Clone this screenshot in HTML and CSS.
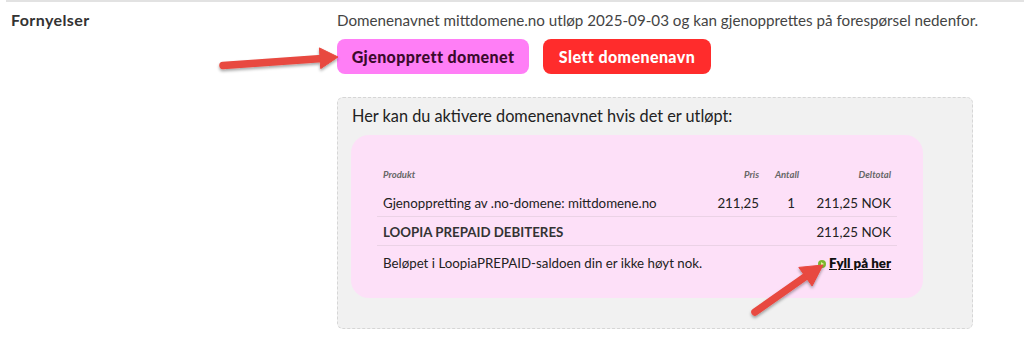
FILE: index.html
```html
<!DOCTYPE html>
<html lang="no">
<head>
<meta charset="utf-8">
<link rel="stylesheet" href="styles.css">
</head>
<body>
<div class="page">
  <div class="section">
    <div class="label">Fornyelser</div>
    <div class="content">
      <p class="desc">Domenenavnet mittdomene.no utløp 2025-09-03 og kan gjenopprettes på forespørsel nedenfor.</p>
      <div class="actions">
        <button class="btn btn-pink">Gjenopprett domenet</button>
        <button class="btn btn-red">Slett domenenavn</button>
      </div>
      <div class="panel">
        <h3 class="panel-title">Her kan du aktivere domenenavnet hvis det er utløpt:</h3>
        <div class="cart">
          <table class="tbl">
            <thead>
              <tr>
                <th class="c-prod">Produkt</th>
                <th class="c-pris">Pris</th>
                <th class="c-ant">Antall</th>
                <th class="c-tot">Deltotal</th>
              </tr>
            </thead>
            <tbody>
              <tr>
                <td class="c-prod">Gjenoppretting av .no-domene: mittdomene.no</td>
                <td class="c-pris">211,25</td>
                <td class="c-ant">1</td>
                <td class="c-tot">211,25 NOK</td>
              </tr>
              <tr>
                <td class="c-prod strong">LOOPIA PREPAID DEBITERES</td>
                <td class="c-pris"></td>
                <td class="c-ant"></td>
                <td class="c-tot">211,25 NOK</td>
              </tr>
              <tr class="last">
                <td class="c-prod" colspan="3">Beløpet i LoopiaPREPAID-saldoen din er ikke høyt nok.</td>
                <td class="c-tot"><a class="fill" href="#"><svg class="go" width="8" height="8" viewBox="0 0 8 8"><circle cx="4" cy="4" r="4" fill="#7cb82f"/><path d="M3 2 L6 4 L3 6 Z" fill="#e4f5a0"/></svg> <span>Fyll på her</span></a></td>
              </tr>
            </tbody>
          </table>
        </div>
      </div>
    </div>
  </div>
</div>
<svg class="annot" width="1024" height="343" viewBox="0 0 1024 343">
  <defs>
    <filter id="sh" x="-20%" y="-20%" width="140%" height="140%">
      <feDropShadow dx="0" dy="2" stdDeviation="1.5" flood-color="#000" flood-opacity="0.35"/>
    </filter>
  </defs>
  <g filter="url(#sh)" fill="#e8483f" stroke="#e8483f">
    <line x1="223" y1="65.5" x2="322" y2="58.4" stroke-width="7.5" stroke-linecap="round"/>
    <polygon points="338,57 320.7,68.6 319.4,47.9" stroke-width="1" stroke-linejoin="round"/>
    <line x1="755" y1="312" x2="807" y2="275.5" stroke-width="7.5" stroke-linecap="round"/>
    <polygon points="823,265 812.1,286 798.8,267.4" stroke-width="1" stroke-linejoin="round"/>
  </g>
</svg>
</body>
</html>
```

FILE: styles.css
```css
html, body {
  margin: 0;
  padding: 0;
  background: #fff;
}
body {
  font-family: "Lato", "Noto Sans", sans-serif;
  color: #333;
  width: 1024px;
  height: 343px;
  overflow: hidden;
  position: relative;
}
.page {
  margin-left: 6px;
  border-top: 2px solid #e2e2e2;
}
.section {
  display: flex;
  padding-top: 8px;
}
.label {
  width: 331px;
  padding-left: 5px;
  box-sizing: border-box;
  font-weight: 700;
  font-size: 16px;
  letter-spacing: 0.4px;
  line-height: 20px;
  color: #333;
}
.content {
  width: 636px;
}
.desc {
  margin: 0;
  font-size: 15.2px;
  line-height: 20px;
  color: #444;
  white-space: nowrap;
}
.actions {
  display: flex;
  gap: 14px;
  margin-top: 9px;
}
.btn {
  border: none;
  border-radius: 8px;
  height: 35px;
  padding: 0;
  font-family: inherit;
  font-weight: 900;
  font-size: 16px;
  letter-spacing: 0.4px;
}
.btn-pink {
  background: #ff7ef6;
  color: #3b0a2c;
  width: 192px;
}
.btn-red {
  background: #ff2c2c;
  color: #fff;
  width: 168px;
}
.panel {
  margin-top: 23px;
  background: #f1f1f1;
  border: 1px dashed #d6d6d6;
  border-radius: 6px;
  height: 232px;
  box-sizing: border-box;
  padding: 7px 49px 0 13px;
}
.panel-title {
  margin: 0 0 8px 1px;
  font-weight: 400;
  font-size: 16.3px;
  line-height: 22px;
  color: #222;
}
.cart {
  background: #fde0f8;
  border-radius: 18px;
  height: 163px;
  box-sizing: border-box;
  padding: 31px 26px 0 26px;
}
.tbl {
  width: 100%;
  border-collapse: collapse;
  font-size: 13.3px;
  color: #222;
}
.tbl th {
  font-size: 9.5px;
  font-style: italic;
  font-weight: 700;
  color: #666;
  padding: 3px 6px 7px;
  line-height: 12px;
  text-align: right;
}
.tbl th.c-prod { text-align: left; }
.tbl th.c-ant { padding-left: 0; padding-right: 4px; }
.tbl td {
  padding: 7px 6px 4px;
  line-height: 17px;
  border-bottom: 1px solid #ebd2e6;
  text-align: right;
  white-space: nowrap;
}
.tbl td.c-prod { text-align: left; }
.tbl td.c-ant { padding-left: 0; padding-right: 8px; }
.tbl tr.last td { border-bottom: none; padding-top: 9px; }
.c-pris { width: 50px; }
.c-ant { width: 30px; }
.c-tot { width: 82px; }
.strong {
  font-weight: 700;
  color: #333;
}
.fill {
  color: #111;
  font-weight: 800;
  text-decoration: none;
}
.fill span { text-decoration: underline; }
.go { vertical-align: 0; }
.annot {
  position: absolute;
  left: 0;
  top: 0;
  pointer-events: none;
}
```
